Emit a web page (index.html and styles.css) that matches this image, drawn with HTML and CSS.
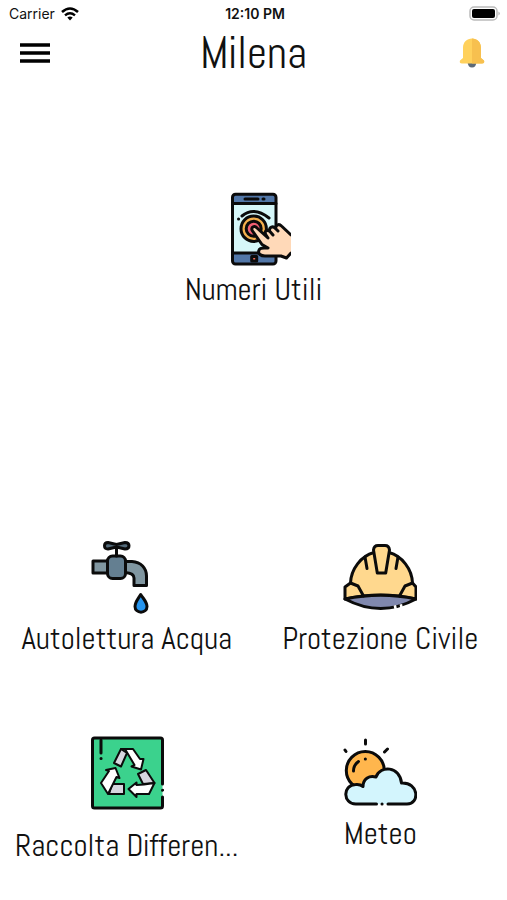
FILE: index.html
```html
<!DOCTYPE html>
<html lang="it">
    <head>
        <title>Milena</title>

        <meta charset="utf-8">
        <meta name="viewport" content="width=device-width, initial-scale=1">

        <link rel="stylesheet" href="styles.css">
    </head>

    <body>
        <div class="status">
            <div class="carrier">
                <span>Carrier</span>
                <svg class="wifi" viewBox="0 0 18 14" aria-hidden="true">
                    <path d="M1 5Q9-2 17 5" fill="none" stroke="#000" stroke-width="2.6"/>
                    <path d="M4 8.300Q9 4 14 8.300" fill="none" stroke="#000" stroke-width="2.4"/>
                    <path d="M6.300 10.500Q9 8.500 11.700 10.500L9 13.500Z"/>
                </svg>
            </div>
            <div class="time">12:10 PM</div>
            <svg class="battery" viewBox="0 0 32 16" aria-hidden="true">
                <rect x="1" y="1" width="27" height="13" rx="4" fill="#fff" stroke="#bbb" stroke-width="1.5"/>
                <rect x="3" y="3" width="23" height="9" rx="2"/>
                <path d="M29.500 5.500Q32 7.500 29.500 9.500Z" fill="#aaa"/>
            </svg>
        </div>

        <header class="header">
            <button class="icon-button" type="button" aria-label="Menu">
                <svg class="burger" viewBox="0 0 30 22" aria-hidden="true">
                    <path d="M0 3H30M0 11H30M0 19H30" stroke="#000" stroke-width="3.4"/>
                </svg>
            </button>
            <h1 class="title">Milena</h1>
            <button class="icon-button" type="button" aria-label="Notifiche">
                <svg class="bell" viewBox="0 0 26 30" aria-hidden="true">
                    <path d="M8.500 24H17.500Q17 29.500 13 29.500T8.500 24Z" fill="#5d6a78"/>
                    <path d="M4 20V10C4 4 8 .5 13 .5S22 4 22 10V20L25 22.500Q26 25.500 23 25.500H3Q0 25.500 1 22.500Z" fill="#ffd15c"/>
                    <path d="M13 .5C18 .5 22 4 22 10V20L25 22.500Q26 25.500 23 25.500H13Z" fill="#f7c04f"/>
                </svg>
            </button>
        </header>

        <main class="menu">
            <a class="tile wide" href="#numeri">
                <svg class="icon" viewBox="0 0 74 74" aria-hidden="true">
                    <rect x="15.5" y="2.3" width="43.5" height="69.7" rx="3" fill="#d6f7f9"/>
                    <path d="M15.500 11.500V5Q15.500 2.300 18.500 2.300H56Q59 2.300 59 5V11.500ZM15.500 61V69Q15.500 72 18.500 72H56Q59 72 59 69V61Z" fill="#5277a8"/>
                    <rect x="15.5" y="2.3" width="43.5" height="69.7" rx="3" class="line"/>
                    <path d="M15.500 11.500H59M15.500 61H59M28 7H41M46 7H47" class="line"/>
                    <rect x="34.7" y="64.5" width="5" height="4.5" fill="#f06b58" class="outline"/>
                    <circle cx="36.7" cy="36.7" r="12.7" fill="#f4b04e" class="outline"/>
                    <circle cx="36.7" cy="36.7" r="7.5" fill="#ef5f72" class="outline"/>
                    <path d="M25 24Q37 14 52 26M21.500 27H21.600" class="line"/>
                    <path d="M35.500 39C33 35.500 37.500 33 40 36L50 45L48 42C48 38 51 37.500 53 40L52.500 37C54 33.500 57 34 58.500 36.500C59 32.500 62 31.500 64.500 34L74 42V61L69.500 66L64 64H48C44 64 40.500 62 42 58C43 55 47 56 51 56L45 52.500Z" fill="#ffd9b8"/>
                    <path d="M74 43L64.500 34C62 31.500 59 32.500 58.500 36.500L61 39M58.500 36.500C56 33.500 52 35 52.500 39L56 43M52.500 39C49 37.500 47 40 49 43L51 46L40 36C37.500 33 33 35.500 35.500 39L45 52.500L51 56C47 56 43 55 42 58C40.500 62 44 64 48 64H64L69.500 66L74 61" class="line"/>
                </svg>
                <span class="label">Numeri Utili</span>
            </a>
            <a class="tile" href="#acqua">
                <svg class="icon" viewBox="0 0 74 74" aria-hidden="true">
                    <path d="M3 20H18V32H3Z" fill="#8096a0" class="outline"/>
                    <path d="M35 20.500H42C51 21 56.500 27 56.500 35V44.500H44V37Q44 32 35 31.500Z" fill="#8096a0" class="outline"/>
                    <rect x="17.5" y="15" width="18" height="22.5" rx="5" fill="#647f91" class="outline"/>
                    <path d="M26.500 7V15" class="line"/>
                    <path d="M26.500 3.500L18 1.500Q14.500 1.500 14.500 4.800T18 8L26.500 6L35 8Q39 8 39 4.800T35 1.500Z" fill="#536a79" class="outline"/>
                    <path d="M50.700 53.500C48 58 45 61 45 65.500C45 73 57 73 57 65.500C57 61 53.500 58 50.700 53.500Z" fill="#2695ef" class="outline"/>
                </svg>
                <span class="label">Autolettura Acqua</span>
            </a>
            <a class="tile" href="#protezione">
                <svg class="icon" viewBox="0 0 74 74" aria-hidden="true">
                    <path d="M7.500 42C8 28 18 15 31 11.500H46C59 15 69 28 69.500 42L73 46V58Q38 50 2 58V46Z" fill="#ffd88e" class="outline"/>
                    <path d="M2 58Q38 50.500 73 58Q38 77 2 58Z" fill="#8088ae" class="outline"/>
                    <path d="M7.500 42L15 45L20.500 55M69.500 42L62 45L56.500 55M22 16L24 27.500M55 16L53 27.500" class="line"/>
                    <path d="M34.300 32L30.500 9Q31 4.500 35 4.500H42Q46 4.500 46.500 9L42.700 32Z" fill="#ffd88e" class="outline"/>
                    <path d="M51 66.500L53.500 66M57 65.500L59.500 65" stroke="#fff" stroke-width="4"/>
                </svg>
                <span class="label">Protezione Civile</span>
            </a>
            <a class="tile" href="#raccolta">
                <svg class="icon" viewBox="0 0 74 74" aria-hidden="true">
                    <path d="M72.500 48V4Q72.500 2 70.500 2H4.500Q2.500 2 2.500 4V70Q2.500 72 4.500 72H70.500Q72.500 72 72.500 70V61" fill="#3bd28d" class="outline"/>
                    <path d="M72.500 54.200H72.600M11 4V17M11 22.500H11.100" class="line"/>
                    <g class="arrows">
                        <path d="M24 27L31 13L37 17L31 30.500Z" fill="#d7d6df"/>
                        <path d="M31 13H43L50 23H53.500L51 33.500L41.500 30.500L44.500 29L35 13Z" fill="#fff"/>
                        <path d="M19 58L22 48H34V58Z" fill="#d7d6df"/>
                        <path d="M18 58L11 47L19 35L16 34L25.500 32L29.500 42L26.500 41L18 58Z" fill="#fff"/>
                        <path d="M48 38L56 34L64.500 47L53 48Z" fill="#d7d6df"/>
                        <path d="M64.500 47L59 58H46.500V61L38.500 53L46.500 46.500V49L54 48.500Z" fill="#fff"/>
                    </g>
                </svg>
                <span class="label clipped">Raccolta Differen...</span>
            </a>
            <a class="tile" href="#meteo">
                <svg class="icon" viewBox="0 0 74 74" aria-hidden="true">
                    <circle cx="22.3" cy="34.5" r="19" fill="#ffb64d" class="outline"/>
                    <path d="M12.700 68C0 68-1 49 12.700 48.500Q17 48 20 50.500C20 43 26 39 33 41C37 29 57 30 58.500 47C76 46 77 68 64 68Z" fill="#d3f5fd"/>
                    <path d="M33.500 68H12.700C0 68-1 49 12.700 48.500Q17 48 20 50.500C20 43 26 39 33 41C37 29 57 30 58.500 47C76 46 77 68 64 68H45M39 68H39.100" class="line"/>
                    <path d="M22.500 4V8M41.500 16L44.500 13M2 14L3 15.500M10.500 35Q10.500 29 15.500 25.500M22.300 23H22.400" class="line"/>
                </svg>
                <span class="label">Meteo</span>
            </a>
        </main>
    </body>
</html>
```
FILE: styles.css
```css
* {
    box-sizing: border-box;
}
body {
    margin: 0;
    background: #fff;
    color: #111;
    font-family: Abel, "Liberation Sans Narrow", "Roboto Condensed", Roboto, sans-serif;
}
.status {
    display: grid;
    grid-template-columns: 1fr auto 1fr;
    align-items: center;
    height: 28px;
    padding: 0 6px 0 9px;
    font: 14px/28px Inter, sans-serif;
}
.carrier {
    display: flex;
    align-items: center;
    gap: 6px;
}
.wifi {
    width: 18px;
    height: 14px;
}
.time {
    font-weight: 600;
}
.battery {
    width: 32px;
    height: 16px;
    justify-self: end;
}
.header {
    display: flex;
    align-items: center;
    justify-content: space-between;
    height: 50px;
    padding: 0 20px;
}
.icon-button {
    display: flex;
    align-items: center;
    justify-content: center;
    width: 30px;
    padding: 0;
    border: 0;
    background: none;
    cursor: pointer;
}
.burger {
    width: 30px;
    height: 22px;
}
.bell {
    width: 26px;
    height: 30px;
}
.title {
    margin: 0;
    font-size: 44px;
    font-weight: 300;
    line-height: 50px;
}
.menu {
    display: grid;
    grid-template-columns: 1fr 1fr;
    row-gap: 77px;
    padding-top: 114px;
}
.tile {
    display: flex;
    flex-direction: column;
    align-items: center;
    color: #111;
    text-decoration: none;
}
.wide {
    grid-column: span 2;
    margin-bottom: 154px;
}
.icon {
    width: 74px;
    height: 74px;
}
.label {
    font-size: 31px;
    font-weight: 300;
    line-height: 40px;
    padding-top: 4px;
    white-space: nowrap;
}
.clipped {
    padding-top: 16px;
}
.line {
    fill: none;
}
.line, .outline {
    stroke: #0b0b0b;
    stroke-width: 3px;
    stroke-linecap: round;
    stroke-linejoin: round;
}
.arrows {
    stroke: #0b0b0b;
    stroke-width: 2px;
    stroke-linejoin: round;
}
```
